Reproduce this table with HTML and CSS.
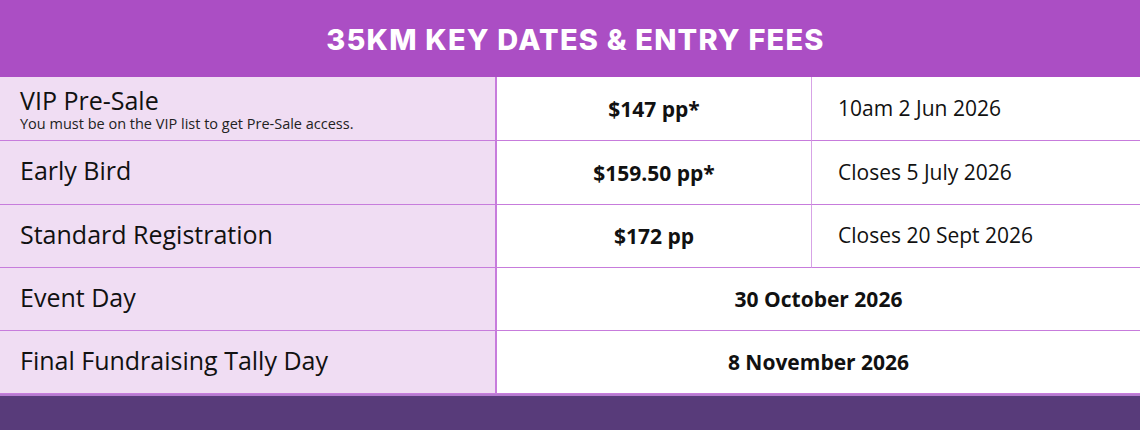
FILE: index.html
```html
<!DOCTYPE html>
<html lang="en">
<head>
<meta charset="utf-8">
<title>35KM Key Dates &amp; Entry Fees</title>
<link rel="stylesheet" href="styles.css">
</head>
<body>
<div class="page">
  <header class="banner"><h1 class="title">35KM KEY DATES &amp; ENTRY FEES</h1></header>
  <div class="table">
    <div class="cell label first"><div><div class="name">VIP Pre-Sale</div><div class="note">You must be on the VIP list to get Pre-Sale access.</div></div></div>
    <div class="cell price">$147 pp*</div>
    <div class="cell date">10am 2 Jun 2026</div>

    <div class="cell label"><div class="name">Early Bird</div></div>
    <div class="cell price">$159.50 pp*</div>
    <div class="cell date">Closes 5 July 2026</div>

    <div class="cell label"><div class="name">Standard Registration</div></div>
    <div class="cell price">$172 pp</div>
    <div class="cell date">Closes 20 Sept 2026</div>

    <div class="cell label"><div class="name">Event Day</div></div>
    <div class="cell price wide">30 October 2026</div>

    <div class="cell label"><div class="name">Final Fundraising Tally Day</div></div>
    <div class="cell price wide">8 November 2026</div>
  </div>
  <footer class="band"></footer>
</div>
</body>
</html>
```

FILE: styles.css
```css
html, body {
  margin: 0;
  padding: 0;
}
body {
  width: 1140px;
  height: 430px;
  overflow: hidden;
  font-family: "Open Sans", "Liberation Sans", sans-serif;
  color: #111;
  background: #ffffff;
}
.page {
  display: flex;
  flex-direction: column;
  height: 430px;
}
.banner {
  height: 77px;
  flex: none;
  background: #ab4ec4;
  display: flex;
  align-items: center;
  justify-content: center;
  padding-left: 11px;
}
.title {
  margin: 0;
  font-family: "Inter", "Liberation Sans", sans-serif;
  font-weight: 800;
  font-size: 29px;
  letter-spacing: 1.2px;
  color: #ffffff;
  padding-top: 1px;
}
.table {
  display: grid;
  grid-template-columns: 497px 315px 1fr;
  grid-template-rows: 64px 64px 63px 63px 63px;
  flex: none;
}
.cell {
  display: flex;
  align-items: center;
  border-bottom: 1px solid #c77cdc;
  box-sizing: border-box;
}
.label {
  background: #f0ddf3;
  border-right: 2px solid #c77cdc;
  padding-left: 20px;
  padding-bottom: 4px;
}
.label.first {
  padding-bottom: 0;
  padding-top: 1px;
}
.name {
  font-size: 25px;
  line-height: 29px;
}
.note {
  font-size: 14.5px;
  line-height: 16px;
  margin-top: 1px;
  color: #222;
}
.price {
  justify-content: center;
  font-weight: 700;
  font-size: 21px;
  border-right: 1px solid #d7a3e6;
}
.price.wide {
  grid-column: span 2;
  border-right: 0;
}
.date {
  padding-left: 26px;
  font-size: 21px;
  padding-bottom: 2px;
}
.band {
  flex: 1;
  background: #583b7a;
  border-top: 2px solid #b67bd0;
}
```
